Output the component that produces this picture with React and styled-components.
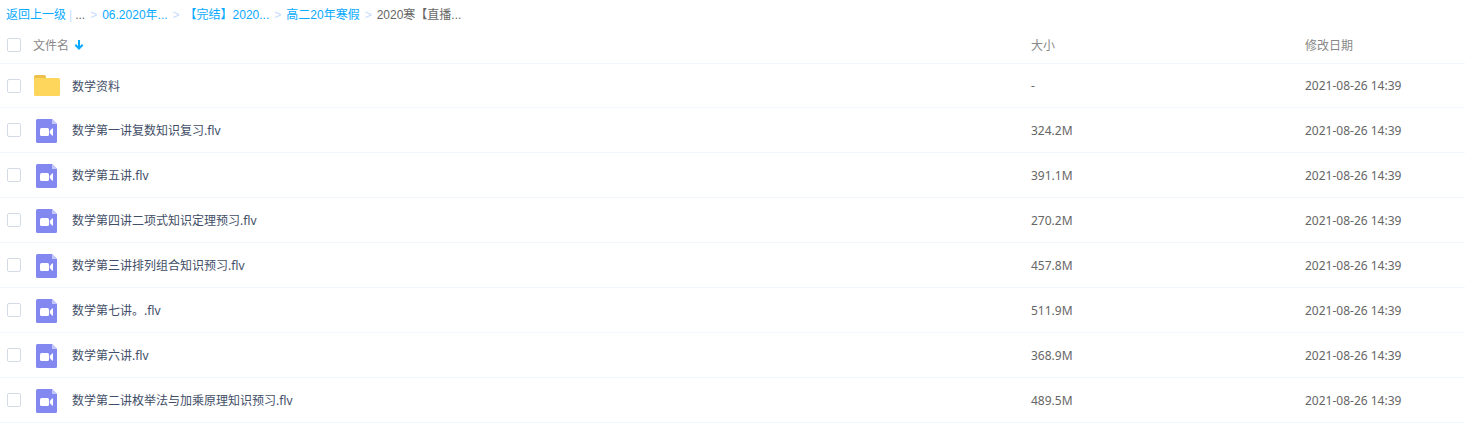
import React, {useState} from 'react';
import styled, {createGlobalStyle} from 'styled-components';

const GlobalStyle = createGlobalStyle`
  body {
    margin: 0;
    background-color: #fff;
    font-family: 'Noto Sans', 'Noto Sans CJK SC', sans-serif;
    font-size: 12px;
    color: #666;
  }
`;

const Breadcrumb = styled.nav`
  display: flex;
  align-items: baseline;
  height: 22px;
  padding: 5px 0 0 6px;
  font-family: 'Liberation Sans', 'Noto Sans CJK SC', sans-serif;
  white-space: pre;
`;

const CrumbLink = styled.a`
  color: #09aaff;
  text-decoration: none;
`;

const Divider = styled.span`
  margin: 0 3px;
  color: #c4dbfe;
`;

const Arrow = styled.span`
  margin: 0 5px;
  color: #c4dbfe;
`;

const Table = styled.table`
  width: 100%;
  table-layout: fixed;
  border-collapse: separate;
  border-spacing: 0;
`;

const Col = styled.col`
  width: ${props => props.$width || 'auto'};
`;

const HeadCell = styled.th`
  height: 36px;
  padding: 0;
  border-bottom: 1px solid #f2f6fd;
  color: #888;
  font-weight: normal;
  text-align: left;
`;

const Row = styled.tr`
  height: 45px;

  &:first-child {
    height: 44px;
  }
`;

const Cell = styled.td`
  padding: 0;
  border-bottom: 1px solid #f2f6fd;
`;

const Checkbox = styled.input.attrs({type: 'checkbox'})`
  appearance: none;
  display: block;
  box-sizing: border-box;
  width: 14px;
  height: 14px;
  margin: 0 0 0 7px;
  border: 1px solid #d4dbe6;
  border-radius: 2px;
  background-color: #fff;

  &:checked {
    background-color: #09aaff;
    border-color: #09aaff;
  }
`;

const SortButton = styled.button`
  display: flex;
  align-items: center;
  gap: 5px;
  padding: 0;
  border: 0;
  background: none;
  color: inherit;
  font: inherit;
  cursor: pointer;
`;

const NameBox = styled.div`
  display: flex;
  align-items: center;
  gap: 12px;
  padding-left: 1px;
`;

const FileLink = styled.a`
  color: #424e67;
  text-decoration: none;
`;

const crumbs = ['06.2020年...', '【完结】2020...', '高二20年寒假'];

const files = [
  {name: '数学资料', size: '-', folder: true},
  {name: '数学第一讲复数知识复习.flv', size: '324.2M'},
  {name: '数学第五讲.flv', size: '391.1M'},
  {name: '数学第四讲二项式知识定理预习.flv', size: '270.2M'},
  {name: '数学第三讲排列组合知识预习.flv', size: '457.8M'},
  {name: '数学第七讲。.flv', size: '511.9M'},
  {name: '数学第六讲.flv', size: '368.9M'},
  {name: '数学第二讲枚举法与加乘原理知识预习.flv', size: '489.5M'}
];

function SortArrow() {
  return (
    <svg width="10" height="10" viewBox="0 0 10 10" fill="none" stroke="#09aaff" strokeWidth="2">
      <path d="M5 0v8M1.3 4.8L5 8.5l3.7-3.7"/>
    </svg>
  );
}

function FolderIcon() {
  return (
    <svg width="26" height="26" viewBox="0 0 26 26">
      <path d="M0 4a2 2 0 0 1 2-2h8a2 2 0 0 1 2 2v4H0z" fill="#ecbe4b"/>
      <rect y="5" width="26" height="18" rx="1.5" fill="#ffd65c"/>
    </svg>
  );
}

function VideoIcon() {
  return (
    <svg width="26" height="26" viewBox="0 0 26 26">
      <path d="M3.5 2H18l5 5v17.5a1.5 1.5 0 0 1-1.5 1.5h-18A1.5 1.5 0 0 1 2 24.5v-21A1.5 1.5 0 0 1 3.5 2z" fill="#8288f0"/>
      <path d="M18 2l5 5h-5z" fill="#c5c8fa"/>
      <rect x="6" y="11" width="9" height="8" rx="1.5" fill="#fff"/>
      <path d="M15.8 14l2.2-2.5q1-.6 1 .5v6q0 1.1-1 .5L15.800 16z" fill="#fff"/>
    </svg>
  );
}

function App() {
  const [checked, setChecked] = useState([]);
  const [reversed, setReversed] = useState(false);

  const rows = reversed ? files.slice().reverse() : files;

  function toggle(name) {
    setChecked(checked.includes(name) ? checked.filter(n => n !== name) : [...checked, name]);
  }

  return (
    <>
      <GlobalStyle/>
      <Breadcrumb>
        <CrumbLink href="#">返回上一级</CrumbLink>
        <Divider>|</Divider>
        <span>...</span>
        {crumbs.map(crumb => (
          <React.Fragment key={crumb}>
            <Arrow>&gt;</Arrow>
            <CrumbLink href="#">{crumb}</CrumbLink>
          </React.Fragment>
        ))}
        <Arrow>&gt;</Arrow>
        <span>2020寒【直播...</span>
      </Breadcrumb>
      <Table>
        <colgroup>
          <Col $width="33px"/>
          <Col/>
          <Col $width="274px"/>
          <Col $width="160px"/>
        </colgroup>
        <thead>
          <tr>
            <HeadCell>
              <Checkbox
                aria-label="全选"
                checked={checked.length === files.length}
                onChange={e => setChecked(e.target.checked ? files.map(f => f.name) : [])}
              />
            </HeadCell>
            <HeadCell>
              <SortButton onClick={() => setReversed(!reversed)}>
                文件名
                <SortArrow/>
              </SortButton>
            </HeadCell>
            <HeadCell>大小</HeadCell>
            <HeadCell>修改日期</HeadCell>
          </tr>
        </thead>
        <tbody>
          {rows.map(file => (
            <Row key={file.name}>
              <Cell>
                <Checkbox
                  aria-label={file.name}
                  checked={checked.includes(file.name)}
                  onChange={() => toggle(file.name)}
                />
              </Cell>
              <Cell>
                <NameBox>
                  {file.folder ? <FolderIcon/> : <VideoIcon/>}
                  <FileLink href="#">{file.name}</FileLink>
                </NameBox>
              </Cell>
              <Cell>{file.size}</Cell>
              <Cell>2021-08-26 14:39</Cell>
            </Row>
          ))}
        </tbody>
      </Table>
    </>
  );
}

export default App;
